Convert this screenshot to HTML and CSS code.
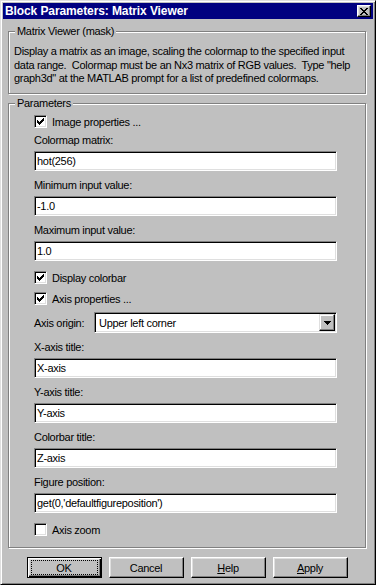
FILE: index.html
```html
<!DOCTYPE html>
<html lang="en">
  <head>
    <meta charset="UTF-8" />
    <title>Block Parameters: Matrix Viewer</title>
    <link rel="stylesheet" href="styles.css">
  </head>
  <body>
    <div class="window">
      <div class="titlebar">
        <span class="title">Block Parameters: Matrix Viewer</span>
        <span class="close-btn">
          <svg width="8" height="7" viewBox="0 0 8 7" shape-rendering="crispEdges"><path d="M0 0h2v1H0z M6 0h2v1H6z M1 1h2v1H1z M5 1h2v1H5z M2 2h4v1H2z M3 3h2v1H3z M2 4h4v1H2z M1 5h2v1H1z M5 5h2v1H5z M0 6h2v1H0z M6 6h2v1H6z" fill="#000"/></svg>
        </span>
      </div>

      <div class="content">
        <fieldset class="group mask">
          <legend>Matrix Viewer (mask)</legend>
          <p class="desc">Display a matrix as an image, scaling the colormap to the specified input<br>data range.&nbsp; Colormap must be an Nx3 matrix of RGB values.&nbsp; Type "help<br>graph3d" at the MATLAB prompt for a list of predefined colormaps.</p>
        </fieldset>

        <fieldset class="group params">
          <legend>Parameters</legend>
          <div class="params-list">
            <div class="check-row">
              <span class="checkbox"><svg width="7" height="7" viewBox="0 0 7 7" shape-rendering="crispEdges"><path d="M6 0h1v1h-1z M5 1h2v1h-2z M0 2h1v1H0z M4 2h3v1H4z M0 3h2v1H0z M3 3h3v1H3z M0 4h5v1H0z M1 5h3v1H1z M2 6h1v1H2z" fill="#000"/></svg></span>
              <span>Image properties ...</span>
            </div>
            <div class="field">
              <span class="field-label">Colormap matrix:</span>
              <div class="textbox">hot(256)</div>
            </div>
            <div class="field">
              <span class="field-label">Minimum input value:</span>
              <div class="textbox">-1.0</div>
            </div>
            <div class="field">
              <span class="field-label">Maximum input value:</span>
              <div class="textbox">1.0</div>
            </div>
            <div class="check-row">
              <span class="checkbox"><svg width="7" height="7" viewBox="0 0 7 7" shape-rendering="crispEdges"><path d="M6 0h1v1h-1z M5 1h2v1h-2z M0 2h1v1H0z M4 2h3v1H4z M0 3h2v1H0z M3 3h3v1H3z M0 4h5v1H0z M1 5h3v1H1z M2 6h1v1H2z" fill="#000"/></svg></span>
              <span>Display colorbar</span>
            </div>
            <div class="check-row">
              <span class="checkbox"><svg width="7" height="7" viewBox="0 0 7 7" shape-rendering="crispEdges"><path d="M6 0h1v1h-1z M5 1h2v1h-2z M0 2h1v1H0z M4 2h3v1H4z M0 3h2v1H0z M3 3h3v1H3z M0 4h5v1H0z M1 5h3v1H1z M2 6h1v1H2z" fill="#000"/></svg></span>
              <span>Axis properties ...</span>
            </div>
            <div class="select-row">
              <span class="select-label">Axis origin:</span>
              <div class="select">
                <span class="select-value">Upper left corner</span>
                <span class="drop-btn"><svg width="7" height="4" viewBox="0 0 7 4" shape-rendering="crispEdges"><path d="M0 0h7v1H0z M1 1h5v1H1z M2 2h3v1H2z M3 3h1v1H3z" fill="#000"/></svg></span>
              </div>
            </div>
            <div class="field">
              <span class="field-label">X-axis title:</span>
              <div class="textbox">X-axis</div>
            </div>
            <div class="field">
              <span class="field-label">Y-axis title:</span>
              <div class="textbox">Y-axis</div>
            </div>
            <div class="field">
              <span class="field-label">Colorbar title:</span>
              <div class="textbox">Z-axis</div>
            </div>
            <div class="field">
              <span class="field-label">Figure position:</span>
              <div class="textbox">get(0,'defaultfigureposition')</div>
            </div>
            <div class="check-row">
              <span class="checkbox"></span>
              <span>Axis zoom</span>
            </div>
          </div>
        </fieldset>

        <div class="buttons">
          <div class="btn btn-default"><span class="focus">OK</span></div>
          <div class="btn">Cancel</div>
          <div class="btn"><span><u>H</u>elp</span></div>
          <div class="btn"><span><u>A</u>pply</span></div>
        </div>
      </div>
    </div>
  </body>
</html>
```

FILE: styles.css
```css
* {
  box-sizing: border-box;
}
body {
  margin: 0;
  font-family: "Liberation Sans", Arial, sans-serif;
  font-size: 11px;
  letter-spacing: -0.3px;
  color: #000;
  background: #c0c0c0;
}
.window {
  width: 376px;
  height: 585px;
  padding: 2px;
  display: flex;
  flex-direction: column;
  background: #c0c0c0;
  border: 1px solid;
  border-color: #dfdfdf #000 #000 #dfdfdf;
  box-shadow: inset 1px 1px #fff, inset -1px -1px #808080;
}
.titlebar {
  height: 16px;
  padding: 0 2px 0 2px;
  display: flex;
  align-items: center;
  justify-content: space-between;
  background: #000080;
  color: #fff;
}
.title {
  font-weight: bold;
  font-size: 12px;
  letter-spacing: -0.1px;
}
.close-btn {
  width: 14px;
  height: 12px;
  display: flex;
  align-items: center;
  justify-content: center;
  background: #c0c0c0;
  border: 1px solid;
  border-color: #fff #000 #000 #fff;
  box-shadow: inset -1px -1px #808080, inset 1px 1px #dfdfdf;
}
.content {
  flex: 1;
  padding: 6px 7px 0 5px;
  display: flex;
  flex-direction: column;
}

/* etched group boxes */
.group {
  margin: 0;
  min-width: 0;
  border: 1px solid #808080;
  box-shadow: 1px 1px 0 #fff, inset 1px 1px 0 #fff;
}
.group legend {
  padding: 0 2px;
  line-height: 13px;
  background: #c0c0c0;
}
.mask {
  padding: 7px 0 7.5px 5px;
}
.mask legend {
  margin-left: 1px;
}
.desc {
  margin: 0;
  line-height: 13.5px;
  white-space: nowrap;
}
.params {
  margin-top: 3px;
  padding: 1px 28px 7px 6px;
}
.params-list {
  padding-left: 19px;
}

.check-row {
  height: 21px;
  display: flex;
  align-items: center;
  gap: 5px;
}
.checkbox {
  width: 13px;
  height: 13px;
  display: flex;
  align-items: center;
  justify-content: center;
  background: #fff;
  border: 1px solid;
  border-color: #808080 #fff #fff #808080;
  box-shadow: inset 1px 1px #000, inset -1px -1px #dfdfdf;
}
.field {
  display: flex;
  flex-direction: column;
  margin-bottom: 6px;
}
.field-label {
  line-height: 16px;
  margin-bottom: 3px;
}
.textbox,
.select {
  height: 20px;
  background: #fff;
  border: 1px solid;
  border-color: #808080 #fff #fff #808080;
  box-shadow: inset 1px 1px #000, inset -1px -1px #dfdfdf;
}
.textbox {
  padding-left: 2px;
  line-height: 18px;
  white-space: nowrap;
}
.select-row {
  height: 21px;
  margin: 3px 0 6px;
  display: flex;
  align-items: center;
}
.select-label {
  width: 60px;
}
.select {
  flex: 1;
  height: 21px;
  padding: 1px;
  display: flex;
  align-items: center;
}
.select-value {
  flex: 1;
  padding-left: 3px;
}
.drop-btn {
  width: 16px;
  height: 17px;
  display: flex;
  align-items: center;
  justify-content: center;
  background: #c0c0c0;
  border: 1px solid;
  border-color: #dfdfdf #000 #000 #dfdfdf;
  box-shadow: inset -1px -1px #808080, inset 1px 1px #fff;
}

.buttons {
  margin-top: 9px;
  display: flex;
  justify-content: center;
  gap: 7px;
}
.btn {
  width: 75px;
  height: 21px;
  display: flex;
  align-items: center;
  justify-content: center;
  background: #c0c0c0;
  border: 1px solid;
  border-color: #fff #000 #000 #fff;
  box-shadow: inset -1px -1px #808080, inset 1px 1px #dfdfdf;
}
.btn-default {
  border-color: #000;
  box-shadow: inset 1px 1px #fff, inset -1px -1px #000, inset -2px -2px #808080, inset 2px 2px #dfdfdf;
}
.focus {
  width: 67px;
  height: 15px;
  display: flex;
  align-items: center;
  justify-content: center;
  border: 1px dotted #000;
}
```
